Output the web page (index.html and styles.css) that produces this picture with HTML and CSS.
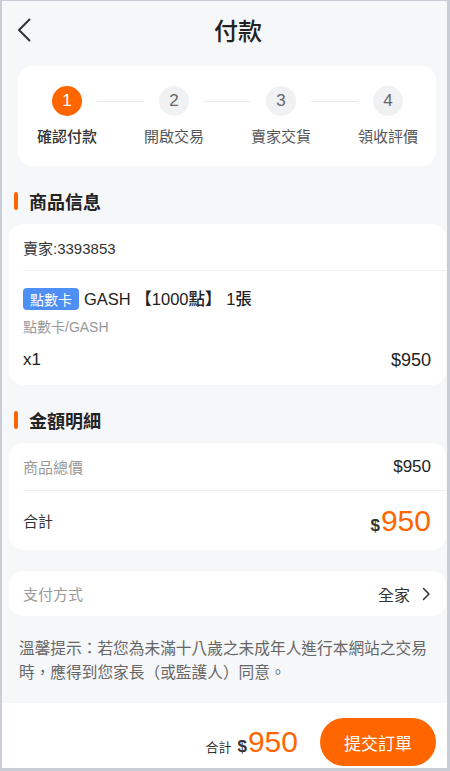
FILE: index.html
```html
<!DOCTYPE html>
<html lang="zh-Hant">
<head>
<meta charset="utf-8">
<title>付款</title>
<link rel="stylesheet" href="styles.css">
</head>
<body>
<div class="frame">
  <header class="header">
    <div class="back">
      <svg width="14" height="24" viewBox="0 0 14 24"><path d="M12.5 1.5 L2 12 L12.5 22.5" fill="none" stroke="#333" stroke-width="2" stroke-linecap="round" stroke-linejoin="round"/></svg>
    </div>
    <h1 class="title">付款</h1>
    <div class="spacer"></div>
  </header>
  <main class="main">
    <section class="card steps">
      <div class="step active"><span class="dot">1</span><span class="label">確認付款</span></div>
      <div class="step"><span class="dot">2</span><span class="label">開啟交易</span></div>
      <div class="step"><span class="dot">3</span><span class="label">賣家交貨</span></div>
      <div class="step last"><span class="dot">4</span><span class="label">領收評價</span></div>
    </section>

    <h2 class="sec-title"><span class="bar"></span>商品信息</h2>
    <section class="card">
      <div class="row seller">賣家:3393853</div>
      <div class="divider"></div>
      <div class="product">
        <div class="p-title"><span class="tag">點數卡</span><span class="p-name">GASH 【1000點】 1張</span></div>
        <div class="p-sub">點數卡/GASH</div>
        <div class="p-price"><span>x1</span><span class="amt">$950</span></div>
      </div>
    </section>

    <h2 class="sec-title"><span class="bar"></span>金額明細</h2>
    <section class="card">
      <div class="row r1"><span class="muted">商品總價</span><span class="amt2">$950</span></div>
      <div class="divider"></div>
      <div class="row r2"><span class="dark">合計</span><span class="big"><span class="cur">$</span><span class="num">950</span></span></div>
    </section>

    <section class="card pay">
      <div class="row r3"><span class="muted">支付方式</span><span class="pay-val">全家<svg width="9" height="14" viewBox="0 0 9 14"><path d="M1.5 1.5 L7 7 L1.5 12.5" fill="none" stroke="#333" stroke-width="1.5" stroke-linecap="round" stroke-linejoin="round"/></svg></span></div>
    </section>

    <p class="notice">溫馨提示：若您為未滿十八歲之未成年人進行本網站之交易時，應得到您家長（或監護人）同意。</p>
  </main>
  <footer class="footer">
    <div class="total"><span class="t-label">合計</span><span class="cur">$</span><span class="num">950</span></div>
    <button class="submit">提交訂單</button>
  </footer>
</div>
</body>
</html>
```

FILE: styles.css
```css
* { box-sizing: border-box; }
html, body { margin: 0; padding: 0; }
body {
  font-family: "Liberation Sans", "Noto Sans CJK TC", sans-serif;
  color: #333;
  background: #fff;
}
.frame {
  width: 450px;
  height: 771px;
  border-style: solid;
  border-color: #c9cdd6;
  border-width: 1px 3px 3px 2px;
  background: #f6f7f9;
  display: flex;
  flex-direction: column;
  overflow: hidden;
}
.header {
  height: 65px;
  flex: none;
  display: flex;
  align-items: flex-start;
}
.back {
  width: 50px;
  padding: 17px 0 0 15px;
  height: 50px;
}
.back svg { display: block; }
.title {
  flex: 1;
  margin: 0;
  text-align: center;
  font-family: "Noto Sans CJK TC", sans-serif;
  font-size: 24px;
  font-weight: 500;
  line-height: 30px;
  padding-top: 14px;
  color: #222;
}
.spacer { width: 23px; }

.main {
  flex: 1;
  padding: 0 1px 0 7px;
}
.card {
  background: #fff;
  border-radius: 14px;
}
.steps {
  margin: 0 10px 0 9px;
  height: 100px;
  padding: 20px 8px 0 9px;
  display: grid;
  grid-template-columns: repeat(4, 80px);
  column-gap: 27px;
}
.step {
  position: relative;
  display: flex;
  flex-direction: column;
  align-items: center;
}
.step::after {
  content: "";
  position: absolute;
  top: 15px;
  left: 70px;
  width: 47px;
  height: 1px;
  background: #e9eaec;
}
.step.last::after { display: none; }
.dot {
  width: 30px;
  height: 30px;
  border-radius: 50%;
  background: #f0f1f3;
  color: #666;
  font-size: 17px;
  line-height: 30px;
  text-align: center;
}
.label {
  margin-top: 10px;
  font-family: "Noto Sans CJK TC", sans-serif;
  font-size: 15px;
  line-height: 20px;
  color: #555;
  white-space: nowrap;
}
.step.active .dot { background: #ff6600; color: #fff; }
.step.active .label { color: #333; font-weight: 500; }

.sec-title {
  margin: 23px 0 11px 5px;
  display: flex;
  align-items: center;
  font-family: "Noto Sans CJK TC", sans-serif;
  font-size: 18px;
  font-weight: 700;
  line-height: 24px;
  color: #222;
}
.bar {
  width: 4px;
  height: 18px;
  border-radius: 2px;
  background: #ff6600;
  margin-right: 11px;
}
.row {
  display: flex;
  align-items: center;
  justify-content: space-between;
  padding: 0 15px 0 14px;
  font-size: 15px;
}
.seller { height: 46px; color: #333; }
.divider {
  height: 1px;
  margin-left: 14px;
  background: #efefef;
}
.product { padding: 17px 15px 14px 14px; }
.p-title {
  display: flex;
  align-items: center;
  height: 22px;
}
.tag {
  height: 22px;
  padding: 0 7px;
  border-radius: 4px;
  background: #4d8ff5;
  color: #fff;
  font-family: "Noto Sans CJK TC", sans-serif;
  font-size: 14px;
  line-height: 22px;
  margin-right: 5px;
}
.p-name {
  font-size: 16.5px;
  font-weight: 500;
  color: #222;
  line-height: 22px;
}
.p-sub {
  margin-top: 7px;
  font-size: 14px;
  line-height: 20px;
  color: #999;
}
.p-price {
  margin-top: 12px;
  display: flex;
  justify-content: space-between;
  align-items: center;
  line-height: 22px;
  font-size: 17px;
  color: #222;
}
.amt { font-size: 18px; }
.r1 { height: 47px; }
.r2 { height: 59px; }
.r3 { height: 45px; }
.muted { color: #999; }
.dark { color: #333; }
.amt2 { font-size: 17px; color: #222; }
.big {
  display: inline-flex;
  align-items: baseline;
  line-height: 1;
}
.cur {
  font-size: 17px;
  font-weight: 700;
  color: #333;
  margin-right: 1px;
}
.num {
  font-size: 30px;
  color: #ff6600;
}
.pay { margin-top: 21px; }
.pay-val {
  display: flex;
  align-items: center;
  font-family: "Noto Sans CJK TC", sans-serif;
  font-size: 16px;
  color: #333;
}
.pay-val svg { margin-left: 12px; }
.notice {
  margin: 20px 0 0 10px;
  padding-right: 12px;
  font-family: "Noto Sans CJK TC", sans-serif;
  font-size: 15.7px;
  line-height: 24px;
  color: #666;
}
.footer {
  height: 65px;
  flex: none;
  background: #fff;
  display: flex;
  align-items: center;
  justify-content: flex-end;
  padding: 15px 11px 2px 0;
}
.total {
  display: inline-flex;
  align-items: baseline;
  line-height: 1;
  margin-right: 22px;
}
.t-label {
  font-family: "Noto Sans CJK TC", sans-serif;
  font-size: 13px;
  color: #333;
  margin-right: 6px;
}
.submit {
  width: 116px;
  height: 48px;
  border: none;
  border-radius: 24px;
  background: #ff6600;
  color: #fff;
  font-family: "Noto Sans CJK TC", sans-serif;
  font-size: 17px;
  padding: 0;
}
```
